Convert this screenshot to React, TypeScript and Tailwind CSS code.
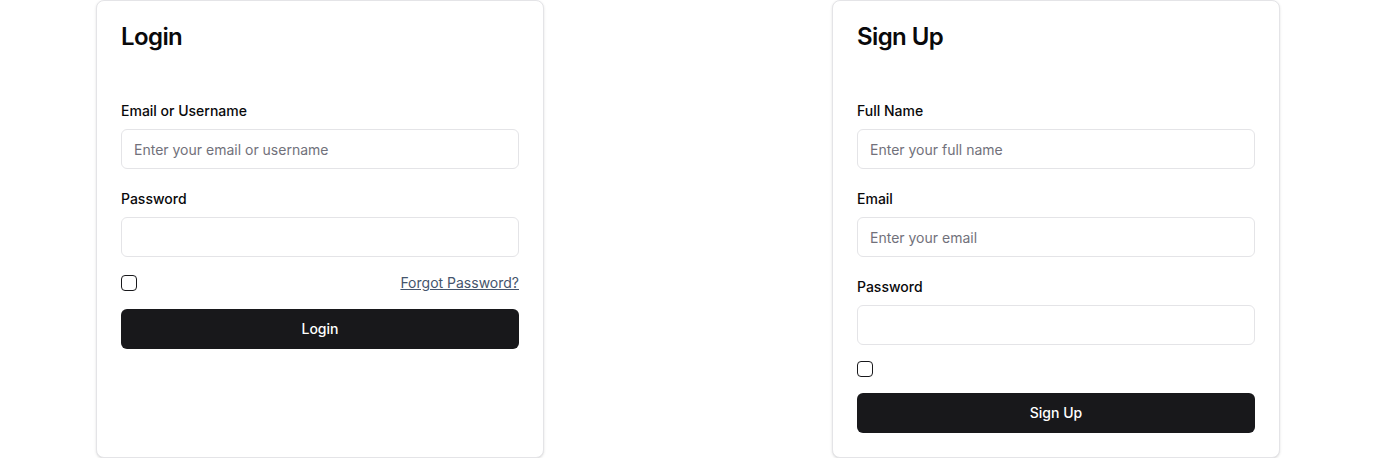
import React from 'react';

function Field({ label, placeholder, type = 'text' }: { label: string; placeholder?: string; type?: string }) {
  return (
    <div>
      <label className="block text-sm leading-5 font-medium text-zinc-950">{label}</label>
      <input
        type={type}
        placeholder={placeholder}
        className="mt-2 block h-10 w-full rounded-md border border-zinc-200 bg-white px-3 text-sm text-zinc-950 placeholder:text-zinc-500 outline-none"
      />
    </div>
  );
}

function Checkbox() {
  return <span className="block h-4 w-4 rounded-sm border border-zinc-900 bg-white" />;
}

function Card({ title, children }: { title: string; children: React.ReactNode }) {
  return (
    <div className="w-[448px] rounded-lg border border-zinc-200 bg-white p-6 shadow-sm">
      <h2 className="text-2xl leading-none font-semibold tracking-tight text-zinc-950">{title}</h2>
      <div className="mt-[52px] flex flex-col">{children}</div>
    </div>
  );
}

export default function App() {
  return (
    <div className="min-h-screen bg-white font-['Inter',sans-serif]">
      <div className="flex items-stretch justify-between px-24">
        {/* Login */}
        <Card title="Login">
          <Field label="Email or Username" placeholder="Enter your email or username" />
          <div className="mt-5">
            <Field label="Password" type="password" />
          </div>
          <div className="mt-4 flex h-5 items-center justify-between">
            <Checkbox />
            <a href="#" className="text-sm leading-5 text-slate-600 underline">
              Forgot Password?
            </a>
          </div>
          <button className="mt-4 h-10 w-full rounded-md bg-zinc-900 text-sm font-medium text-white">
            Login
          </button>
        </Card>

        {/* Sign up */}
        <Card title="Sign Up">
          <Field label="Full Name" placeholder="Enter your full name" />
          <div className="mt-5">
            <Field label="Email" placeholder="Enter your email" />
          </div>
          <div className="mt-5">
            <Field label="Password" type="password" />
          </div>
          <div className="mt-4 flex h-4 items-center">
            <Checkbox />
          </div>
          <button className="mt-4 h-10 w-full rounded-md bg-zinc-900 text-sm font-medium text-white">
            Sign Up
          </button>
        </Card>
      </div>
    </div>
  );
}
